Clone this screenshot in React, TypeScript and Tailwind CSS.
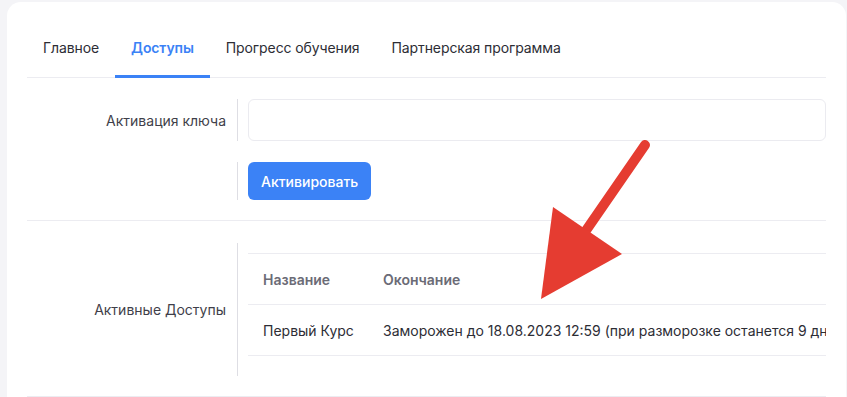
import React from "react";

const font = { fontFamily: "Inter, 'Noto Sans', sans-serif" };

function Tabs() {
  const tabs = ["Главное", "Доступы", "Прогресс обучения", "Партнерская программа"];
  return (
    <div className="flex border-b border-[#ececf1]">
      {tabs.map((t, i) => (
        <div
          key={t}
          className={
            "px-4 pt-[16px] pb-[17px] text-[14px] leading-[20px] tracking-[-0.1px] border-b-[3px] -mb-px " +
            (i === 1
              ? "border-[#3b82f6] text-[#3b82f6] font-semibold"
              : "border-transparent text-[#2d2d35]")
          }
        >
          {t}
        </div>
      ))}
    </div>
  );
}

export default function App() {
  return (
    <div className="relative w-[847px] h-[397px] overflow-hidden bg-[#f4f4f7] pt-[2px] pl-[7px]" style={font}>
      <div className="w-[839px] h-[420px] bg-white rounded-[14px] px-5 pt-5">
        <Tabs />
        {/* Key activation */}
        <div className="border-b border-[#ececf1] pt-[21px] pb-[20px] flex flex-col gap-[21px]">
          <div className="flex items-center">
            <div className="w-[210px] shrink-0 pr-[11px] text-right text-[14px] text-[#3f3f4a]">Активация ключа</div>
            <div className="border-l border-[#dedee4] pl-[10px] h-[42px] flex-1">
              <div className="h-[42px] w-full border border-[#ebebf0] rounded-[6px] bg-white" />
            </div>
          </div>
          <div className="flex items-center">
            <div className="w-[210px] shrink-0" />
            <div className="border-l border-[#dedee4] pl-[10px] h-[38px] flex-1 flex items-center">
              <button className="h-[38px] px-[13px] rounded-[6px] bg-[#3b82f6] text-white text-[14px] font-medium">
                Активировать
              </button>
            </div>
          </div>
        </div>
        {/* Active accesses */}
        <div className="border-b border-[#ececf1] pt-[22px] pb-[20px]">
          <div className="flex items-center">
            <div className="w-[210px] shrink-0 pr-[11px] text-right text-[14px] text-[#3f3f4a]">Активные Доступы</div>
            <div className="border-l border-[#dedee4] pl-[10px] h-[133px] flex-1 min-w-0 overflow-hidden">
              <div className="mt-[10px] border-t border-[#ececf1] whitespace-nowrap text-[14px]">
                <div className="flex h-[51px] items-center border-b border-[#ececf1]">
                  <div className="w-[135px] shrink-0 pl-[15px] font-semibold text-[#6b6b76]">Название</div>
                  <div className="shrink-0 font-semibold text-[#6b6b76]">Окончание</div>
                </div>
                <div className="flex h-[51px] items-center border-b border-[#ececf1] text-[#2d2d35]">
                  <div className="w-[135px] shrink-0 pl-[15px]">Первый Курс</div>
                  <div className="shrink-0">Заморожен до 18.08.2023 12:59 (при разморозке останется 9 дней)</div>
                </div>
              </div>
            </div>
          </div>
        </div>
      </div>
      <svg className="absolute left-0 top-0 pointer-events-none" width="847" height="397">
        <line x1="645" y1="145" x2="576" y2="245" stroke="#e53c31" strokeWidth="10" strokeLinecap="round" />
        <polygon points="553,207 622,254 541,299" fill="#e53c31" />
      </svg>
    </div>
  );
}
